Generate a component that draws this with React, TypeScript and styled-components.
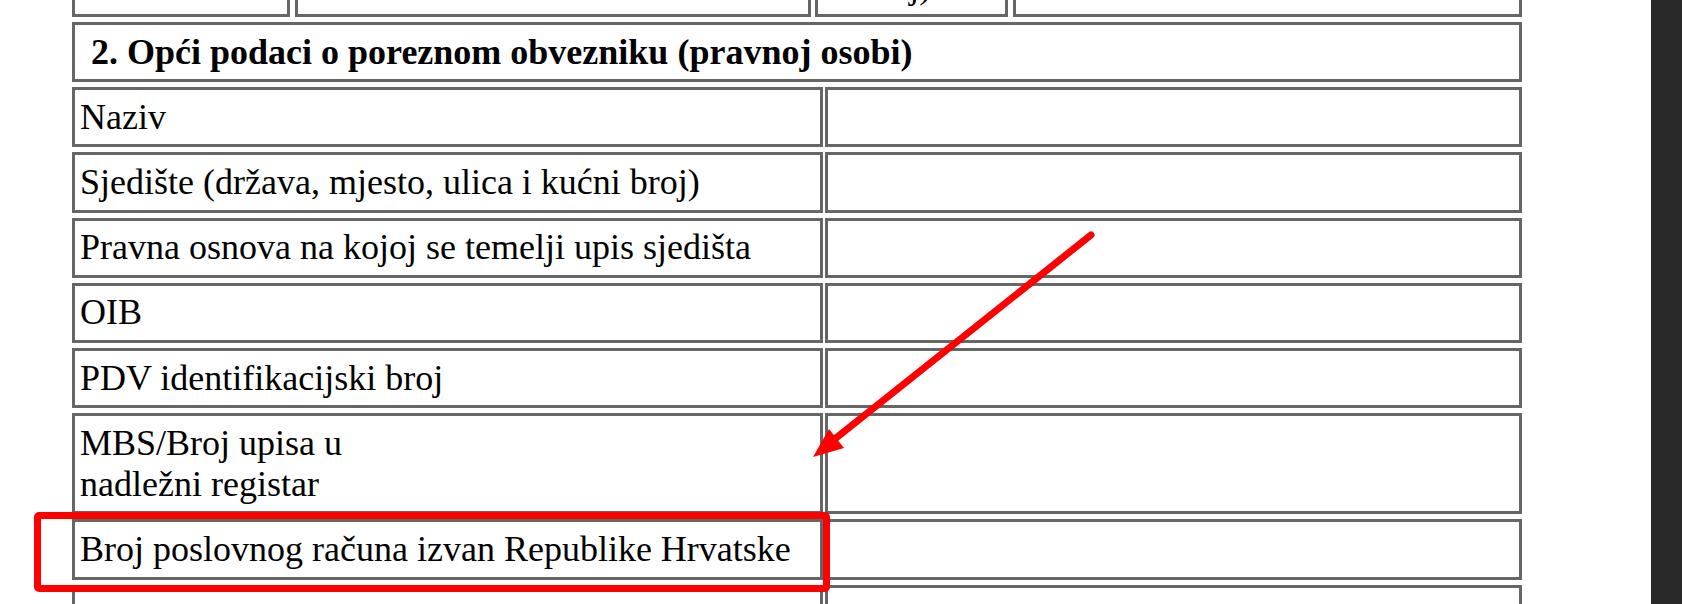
import React from "react";
import styled, { createGlobalStyle } from "styled-components";

const Global = createGlobalStyle`
  html, body {
    margin: 0;
    padding: 0;
    background: #ffffff;
    overflow: hidden;
  }
  body {
    font-family: "Liberation Serif", "Times New Roman", serif;
    color: #000000;
  }
`;

const Page = styled.div`
  position: relative;
  display: flex;
  width: 1682px;
  height: 604px;
  overflow: hidden;
  background: #ffffff;
`;

const Document = styled.div`
  flex: 1;
  display: flex;
  flex-direction: column;
  gap: 5px;
  padding-left: 72px;
  overflow: hidden;
`;

const SideStrip = styled.div`
  width: 31px;
  flex: none;
  background: #282828;
`;

const Cell = styled.div<{ $bold?: boolean; $indent?: number }>`
  box-sizing: border-box;
  border: 3px solid #666666;
  padding: 6.6px 5px 6.6px ${(p) => p.$indent ?? 5}px;
  font-size: 36px;
  line-height: 41px;
  font-weight: ${(p) => (p.$bold ? 700 : 400)};
  white-space: nowrap;
  overflow: hidden;
`;

const TopRow = styled.div`
  display: grid;
  grid-template-columns: 218px 516px 193px 509px;
  justify-content: space-between;
  width: 1450px;
  margin-top: -43.5px;
  flex: none;
`;

const TopCell = styled(Cell)<{ $textLeft?: number }>`
  height: 60.5px;
  padding-left: ${(p) => p.$textLeft ?? 5}px;
`;

const HeaderRow = styled(Cell)`
  width: 1450px;
  flex: none;
`;

const DataRow = styled.div`
  display: grid;
  grid-template-columns: 751px 697px;
  column-gap: 2px;
  width: 1450px;
  flex: none;
`;

const Overlay = styled.svg`
  position: absolute;
  left: 0;
  top: 0;
  width: 1682px;
  height: 604px;
  pointer-events: none;
`;

const HighlightBox = styled.div`
  position: absolute;
  left: 34px;
  top: 512px;
  width: 796px;
  height: 80px;
  box-sizing: border-box;
  border: 7px solid #ff0000;
  border-radius: 5px;
  pointer-events: none;
`;

const rows: { label: React.ReactNode }[] = [
  { label: "Naziv" },
  { label: "Sjedište (država, mjesto, ulica i kućni broj)" },
  { label: "Pravna osnova na kojoj se temelji upis sjedišta" },
  { label: "OIB" },
  { label: "PDV identifikacijski broj" },
  {
    label: (
      <>
        MBS/Broj upisa u
        <br />
        nadležni registar
      </>
    ),
  },
  { label: "Broj poslovnog računa izvan Republike Hrvatske" },
  { label: "" },
];

export default function App() {
  return (
    <>
      <Global />
      <Page>
        <Document>
          <TopRow>
            <TopCell />
            <TopCell />
            <TopCell $textLeft={43}>broj)</TopCell>
            <TopCell />
          </TopRow>
          <HeaderRow $bold $indent={16}>
            2. Opći podaci o poreznom obvezniku (pravnoj osobi)
          </HeaderRow>
          {rows.map((r, i) => (
            <DataRow key={i}>
              <Cell>{r.label || "\u00a0"}</Cell>
              <Cell>{"\u00a0"}</Cell>
            </DataRow>
          ))}
        </Document>
        <SideStrip />
        <HighlightBox />
        <Overlay viewBox="0 0 1682 604">
          <line
            x1="1091"
            y1="235"
            x2="836"
            y2="438"
            stroke="#ff0000"
            strokeWidth="7"
            strokeLinecap="round"
          />
          <polygon points="813,457 844,448 829,429" fill="#ff0000" />
        </Overlay>
      </Page>
    </>
  );
}
